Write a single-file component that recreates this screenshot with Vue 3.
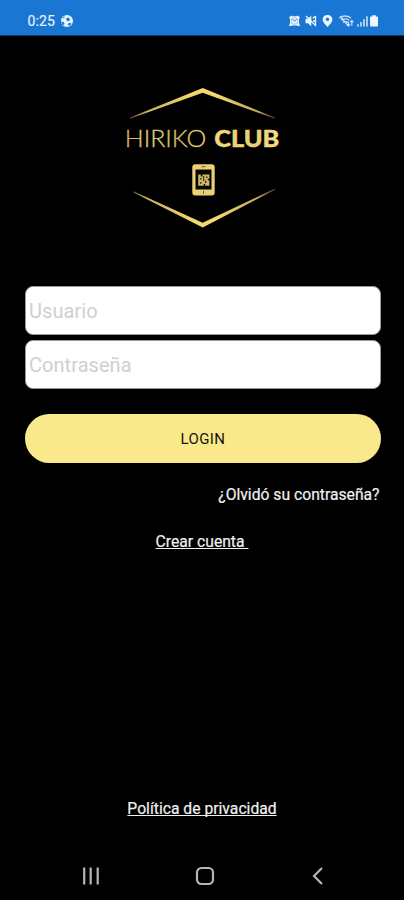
<script setup>
import { ref } from 'vue'

const user = ref('')
const password = ref('')
</script>

<template>
  <div class="screen">
    <header class="status">
      <div class="status-left">
        <span class="clock">0:25</span>
        <svg class="ball" viewBox="0 0 14 14">
          <circle cx="7" cy="7" r="6" fill="#e9f3fb" />
          <path d="M6.200 4.200 8.600 3.400 10 5.400 8.600 7.200 6.600 6.400Z M1.200 7.600 3.600 8 4.600 10 3 11.400Z M7.400 10.200 9.600 8.800 11.400 9.600 9.800 12Z M2.600 4 4.600 2.200 4.200 4.600Z" fill="#1976d2" />
        </svg>
      </div>
      <svg class="status-icons" viewBox="0 0 92 16">
        <g fill="#eef6fd">
          <path d="M1 4.600 3.400 2.400 4.600 3.200H8.400L9.600 2.400 12 4.600 11 6V10L12 13H9.800L9 12.600H4L3.200 13H1L2 10V6Z" />
          <path d="M17.500 5.700H20L23.300 2.800V13.200L20 10.300H17.500Z" />
          <path d="M39.500 2C36.600 2 34.600 4 34.600 6.600 34.600 9.600 39.500 14 39.500 14S44.400 9.600 44.400 6.600C44.400 4 42.400 2 39.500 2Z" />
          <path d="M69 11.200h1.900V13.400H69zM72 9h1.900v4.400H72zM75 6.200h1.900v7.200H75zM78 3.200h1.900v10.200H78z" opacity=".7" />
          <path d="M84.200 2.300h3.600v1.300h1.100q1.100 0 1.100 1v7.900q0 1-1.100 1h-5.800q-1.100 0-1.100-1V4.600q0-1 1.100-1h1.100z" />
        </g>
        <path d="M4.600 6.200 6.500 8.200 8.600 6.400" fill="none" stroke="#1976d2" stroke-width=".9" />
        <circle cx="6.500" cy="8" r="3.300" fill="none" stroke="#1976d2" stroke-width=".4" />
        <circle cx="39.500" cy="6.300" r="1.700" fill="#1976d2" />
        <g fill="none" stroke="#eef6fd" stroke-width="1.300">
          <path d="M18 3 28 13M24.700 5.200 27.500 3M25 8h3M27.500 3v9.500" />
          <path d="M51 5Q57 1 63 5M53 7.200Q57 4.500 61.500 7.200M55 9.400Q57.500 7.500 60 9.600M52 3.500 60 12.500M60.500 8.500v4.200M63.800 12.700V8" opacity=".8" />
          <path d="M59 11.300 60.500 13 62 11.300M62.400 9.200 63.800 7.600 65.200 9.200" opacity=".75" />
        </g>
      </svg>
    </header>

    <main class="content">
      <svg class="logo" viewBox="115 80 175 155">
        <defs>
          <linearGradient id="edge" gradientUnits="userSpaceOnUse" x1="129" y1="0" x2="276" y2="0">
            <stop offset="0" stop-color="#9a8a55" stop-opacity=".5" />
            <stop offset=".12" stop-color="#c9b15c" />
            <stop offset=".42" stop-color="#f0d66c" />
            <stop offset=".58" stop-color="#f5dc70" />
            <stop offset=".88" stop-color="#bda755" />
            <stop offset="1" stop-color="#807653" stop-opacity=".5" />
          </linearGradient>
          <linearGradient id="gold" x1="0" y1="0" x2="1" y2="0">
            <stop offset="0" stop-color="#c4a957" />
            <stop offset=".3" stop-color="#f1db87" />
            <stop offset=".6" stop-color="#d5bd64" />
            <stop offset="1" stop-color="#f3dc7d" />
          </linearGradient>
          <linearGradient id="goldBold" x1="0" y1="0" x2="1" y2="0">
            <stop offset="0" stop-color="#f0da84" />
            <stop offset=".6" stop-color="#e8cf74" />
            <stop offset="1" stop-color="#f6e089" />
          </linearGradient>
        </defs>
        <path d="M130 117.600 202.700 88 275 117.600V118.700L202.700 92.800 130 118.700Z" fill="url(#edge)" />
        <path d="M133.500 191.300V192.500L202.700 227.500 275 189.800V188.600L202.700 222.700Z" fill="url(#edge)" />
        <text class="thin" x="124.800" y="146.700" textLength="81.500" lengthAdjust="spacingAndGlyphs" fill="url(#gold)">HIRIKO</text>
        <text class="heavy" x="214.300" y="146.700" textLength="65" lengthAdjust="spacingAndGlyphs" fill="url(#goldBold)">CLUB</text>
        <rect x="192.300" y="164.300" width="22.400" height="31.200" rx="3" fill="#ead174" />
        <rect x="195.500" y="169.500" width="16" height="20" fill="#080600" />
        <path d="M201.500 166.700h4M203.500 190.800v3" stroke="#6d5c25" stroke-width="1" />
        <path d="M198.200 174.500h2.600v2h1.600v-2h7v4.200h-1.600v1.500h1.600v5.500h-4.300v-1.700h-1.300v1.700h-5.600z" fill="#cdb566" />
        <path d="M200 178h1.500v1.500H200zM203 176h1.200v5H203zM206 176.500h1.500v1.500H206zM200 182h1.500v1.800H200zM205 180.500h1.200v2.500H205z" fill="#40351a" />
      </svg>

      <form class="form" @submit.prevent>
        <input v-model="user" class="field" type="text" placeholder="Usuario" />
        <input v-model="password" class="field" type="password" placeholder="Contraseña" />
        <button class="login" type="submit"><span>LOGIN</span></button>
      </form>

      <a class="forgot">¿Olvidó su contraseña?</a>
      <a class="create">Crear cuenta&nbsp;</a>
      <a class="privacy">Política de privacidad</a>
    </main>

    <nav class="navbar">
      <svg viewBox="0 0 20 20"><path d="M3.200 1.500v17M9.700 1.500v17M16.700 1.500v17" /></svg>
      <svg viewBox="0 0 20 20"><rect x="2" y="2" width="16" height="16" rx="4.500" /></svg>
      <svg viewBox="0 0 20 20"><path d="M14 2 6 10 14 18" /></svg>
    </nav>
  </div>
</template>

<style>
body {
  margin: 0;
  background: #000;
}
</style>

<style scoped>
.screen {
  width: 404px;
  height: 900px;
  display: flex;
  flex-direction: column;
  overflow: hidden;
  background: #000;
  color: #f0f0f0;
  font-family: Roboto, "Liberation Sans", sans-serif;
}

.status {
  height: 36px;
  box-sizing: border-box;
  padding: 6px 24.500px 0 27.500px;
  display: flex;
  justify-content: space-between;
  align-items: center;
  background: #1976d2;
  border-bottom: 1px solid #0d3a68;
}

.status-left {
  display: flex;
  align-items: center;
  gap: 5px;
}

.clock {
  font-size: 14px;
  line-height: 16px;
  letter-spacing: 0.1px;
  color: #e5f1fb;
  -webkit-text-stroke: 0.2px #e5f1fb;
}

.ball {
  width: 14px;
  height: 14px;
}

.status-icons {
  width: 92px;
  height: 16px;
}

.content {
  flex: 1;
  display: flex;
  flex-direction: column;
  align-items: center;
  padding: 44px 23px 0 25px;
}

.logo {
  width: 175px;
  height: 155px;
  margin-right: 2px;
}

.logo text {
  font-family: Lato, "Open Sans", sans-serif;
  font-size: 22.500px;
}

.thin {
  font-weight: 300;
  stroke: #d5bd64;
  stroke-width: 0.3px;
}

.heavy {
  font-weight: 900;
  stroke: #ecd47a;
  stroke-width: 0.4px;
}

.form {
  align-self: stretch;
  display: flex;
  flex-direction: column;
  gap: 5px;
  margin-top: 51px;
}

.field {
  display: block;
  width: 100%;
  height: 49px;
  box-sizing: border-box;
  margin: 0;
  padding: 0 3px;
  border: 1px solid #999;
  border-radius: 8px;
  background: #fff;
  color: #222;
  font-family: inherit;
  font-size: 20px;
  letter-spacing: 0.05px;
}

.field::placeholder {
  color: #cfcfcf;
  opacity: 1;
}

.login {
  width: 100%;
  height: 49px;
  margin: 20px 0 0;
  padding: 0;
  border: 0;
  border-radius: 25px;
  background: #fae98b;
  color: #16140c;
  font-family: inherit;
  font-size: 15px;
  letter-spacing: 0.4px;
}

.forgot {
  align-self: flex-end;
  margin: 22px 1.500px 0 0;
  font-size: 15.700px;
  line-height: 20px;
  -webkit-text-stroke: 0.2px #f0f0f0;
}

.create,
.privacy {
  font-size: 15.700px;
  line-height: 20px;
  text-decoration: underline;
  text-decoration-thickness: 1px;
  text-underline-offset: 1px;
  margin-right: 2px;
  -webkit-text-stroke: 0.2px #f0f0f0;
}

.create {
  margin-top: 27px;
}

.privacy {
  margin-top: auto;
  margin-bottom: 33px;
  text-decoration-skip-ink: none;
}

.navbar {
  height: 48px;
  box-sizing: border-box;
  padding: 0 76px 0 81px;
  display: flex;
  justify-content: space-between;
  align-items: center;
}

.navbar svg {
  width: 20px;
  height: 20px;
  fill: none;
  stroke: #b5b5b5;
  stroke-width: 2.200;
}
</style>
